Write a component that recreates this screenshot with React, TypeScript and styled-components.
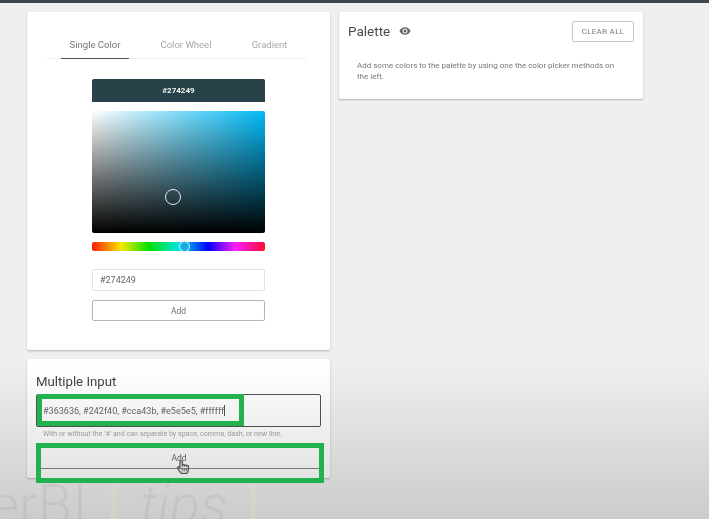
import React from "react";
import styled, { createGlobalStyle } from "styled-components";
import { MdVisibility } from "react-icons/md";
import { FaRegHandPointer } from "react-icons/fa";

const GlobalStyle = createGlobalStyle`
  html, body {
    margin: 0;
    padding: 0;
    background: #efefef;
  }
  * {
    box-sizing: border-box;
  }
`;

const tabs = ["Single Color", "Color Wheel", "Gradient"];

const App: React.FC = () => {
  return (
    <>
      <GlobalStyle />
      <Page>
        <TopBar />
        <Columns>
          <LeftColumn>
            <PickerCard>
              <Tabs>
                {tabs.map((tab, key) => (
                  <Tab key={tab} $active={key === 0}>
                    {tab}
                  </Tab>
                ))}
              </Tabs>
              <Picker>
                <ColorHeader>#274249</ColorHeader>
                <Saturation>
                  <SaturationThumb />
                </Saturation>
                <Hue>
                  <HueThumb />
                </Hue>
                <HexInput readOnly value="#274249" />
                <PickerButton>Add</PickerButton>
              </Picker>
            </PickerCard>
            <MultipleCard>
              <CardTitle>Multiple Input</CardTitle>
              <MultipleInput>
                #363636, #242f40, #cca43b, #e5e5e5, #ffffff
                <Caret />
              </MultipleInput>
              <Hint>With or without the '#' and can separate by space, comma, dash, or new line.</Hint>
              <WideButton>Add</WideButton>
            </MultipleCard>
          </LeftColumn>
          <PaletteCard>
            <PaletteHeader>
              <PaletteTitle>
                Palette
                <MdVisibility size={12} color="#666" />
              </PaletteTitle>
              <ClearButton>CLEAR ALL</ClearButton>
            </PaletteHeader>
            <PaletteText>
              Add some colors to the palette by using one the color picker methods on the left.
            </PaletteText>
          </PaletteCard>
        </Columns>
        <Shade />
        <Watermark>
          <span>erBI</span>
          <Bar />
          <Tips>tips</Tips>
          <Bar />
        </Watermark>
        <InputHighlight />
        <ButtonHighlight />
        <HandCursor>
          <FaRegHandPointer size={14} color="#555" />
        </HandCursor>
      </Page>
    </>
  );
};

const Page = styled.div`
  position: relative;
  width: 709px;
  height: 519px;
  overflow: hidden;
  background: #efefef;
  font-family: Roboto, "Liberation Sans", sans-serif;
  filter: blur(0.35px);
`;

const TopBar = styled.div`
  height: 3px;
  background: #3b4751;
`;

const Columns = styled.div`
  display: flex;
  align-items: flex-start;
  gap: 9px;
  padding: 9px 0 0 27px;
`;

const LeftColumn = styled.div`
  display: flex;
  flex-direction: column;
  gap: 9px;
  width: 303px;
`;

const Card = styled.section`
  background: #ffffff;
  border-radius: 2px;
  box-shadow: 0 1px 2px rgba(0, 0, 0, 0.25);
`;

const PickerCard = styled(Card)`
  height: 338px;
  padding: 18px 23px 0 20px;
`;

const Tabs = styled.div`
  display: grid;
  grid-template-columns: 68px 114px 53px;
  height: 29px;
  padding-left: 14px;
  border-bottom: 1px solid #f0f0f0;
`;

const Tab = styled.div<{ $active: boolean }>`
  height: 29px;
  padding-top: 9px;
  font-size: 9.5px;
  text-align: center;
  white-space: nowrap;
  color: ${({ $active }) => ($active ? "#777777" : "#a8a8a8")};
  border-bottom: 1px solid ${({ $active }) => ($active ? "#555555" : "transparent")};
`;

const Picker = styled.div`
  display: flex;
  flex-direction: column;
  width: 173px;
  margin: 20px 0 0 45px;
`;

const ColorHeader = styled.div`
  display: flex;
  align-items: center;
  justify-content: center;
  height: 23px;
  border-radius: 2px 2px 0 0;
  background: #274249;
  color: #f2f2f2;
  font-size: 8px;
  font-weight: 700;
`;

const Saturation = styled.div`
  position: relative;
  height: 122px;
  margin-top: 9px;
  border-radius: 2px;
  background: linear-gradient(to top, #000000, rgba(0, 0, 0, 0)),
    linear-gradient(to right, #ffffff, #00b9f5);
`;

const SaturationThumb = styled.div`
  position: absolute;
  left: 73px;
  top: 78px;
  width: 16px;
  height: 16px;
  border: 1px solid #dfe9ec;
  border-radius: 50%;
`;

const Hue = styled.div`
  position: relative;
  height: 9px;
  margin-top: 9px;
  border-radius: 2px;
  background: linear-gradient(
    to right,
    #ff1a00,
    #f5e900 17%,
    #00e000 33%,
    #00e5e5 50%,
    #0000ff 67%,
    #ff20ff 83%,
    #ff0a30
  );
`;

const HueThumb = styled.div`
  position: absolute;
  left: 87px;
  top: -1px;
  width: 11px;
  height: 11px;
  border: 1px solid #e8f4f8;
  border-radius: 50%;
  background: #12aee6;
`;

const HexInput = styled.input`
  height: 22px;
  margin-top: 18px;
  padding: 0 7px;
  border: 1px solid #e2e2e2;
  border-radius: 2px;
  outline: none;
  color: #666666;
  font-family: inherit;
  font-size: 9px;
`;

const PickerButton = styled.button`
  height: 21px;
  margin-top: 9px;
  padding: 0;
  border: 1px solid #b5b5b5;
  border-radius: 2px;
  background: #ffffff;
  color: #707070;
  font-family: inherit;
  font-size: 8.5px;
`;

const MultipleCard = styled(Card)`
  height: 119px;
  padding: 15px 9px 0;
`;

const CardTitle = styled.h2`
  margin: 0;
  font-size: 13.2px;
  font-weight: 400;
  line-height: 16px;
  color: #444444;
`;

const MultipleInput = styled.div`
  display: flex;
  align-items: center;
  height: 33px;
  margin-top: 4px;
  padding-left: 6px;
  border: 1.5px solid #555555;
  border-radius: 2px;
  color: #666666;
  font-size: 9.05px;
  white-space: nowrap;
`;

const Caret = styled.span`
  width: 1px;
  height: 11px;
  background: #555555;
`;

const Hint = styled.p`
  margin: 2px 0 0 7px;
  font-size: 7.1px;
  line-height: 10px;
  white-space: nowrap;
  color: #a5a5a5;
`;

const WideButton = styled.button`
  display: block;
  width: 285px;
  height: 21px;
  margin-top: 9px;
  padding: 0;
  border: none;
  border-left: 1px solid #a8a8a8;
  border-bottom: 1px solid #8a8a8a;
  background: transparent;
  color: #666666;
  font-family: inherit;
  font-size: 8.5px;
`;

const PaletteCard = styled(Card)`
  width: 304px;
  height: 87px;
  padding: 9px 9px 0;
`;

const PaletteHeader = styled.div`
  display: flex;
  align-items: center;
  justify-content: space-between;
  height: 20px;
`;

const PaletteTitle = styled.h2`
  display: flex;
  align-items: center;
  gap: 9px;
  margin: 0;
  font-size: 13.5px;
  font-weight: 400;
  color: #4a4a4a;
`;

const ClearButton = styled.button`
  width: 62px;
  height: 21px;
  padding: 0;
  border: 1px solid #c8c8c8;
  border-radius: 2px;
  background: #ffffff;
  color: #7a7a7a;
  font-family: inherit;
  font-size: 8px;
  letter-spacing: 0.3px;
`;

const PaletteText = styled.p`
  margin: 19px 10px 0 9px;
  font-size: 8px;
  line-height: 11px;
  color: #777777;
`;

const Shade = styled.div`
  position: absolute;
  inset: 362px 0 0;
  pointer-events: none;
  background: linear-gradient(to bottom, rgba(0, 0, 0, 0), rgba(0, 0, 0, 0.15));
`;

const Watermark = styled.div`
  position: absolute;
  left: -10px;
  top: 477px;
  display: flex;
  align-items: flex-start;
  font-size: 56px;
  line-height: 56px;
  font-weight: 300;
  white-space: nowrap;
  color: rgba(0, 0, 0, 0.05);
`;

const Tips = styled.em`
  margin-left: 24px;
`;

const Bar = styled.span`
  width: 5px;
  height: 40px;
  margin: 8px 0 0 24px;
  background: rgba(235, 235, 170, 0.2);
`;

const Highlight = styled.div`
  position: absolute;
  border: 5px solid #21b14d;
  pointer-events: none;
`;

const InputHighlight = styled(Highlight)`
  left: 37px;
  top: 394px;
  width: 207px;
  height: 32px;
`;

const ButtonHighlight = styled(Highlight)`
  left: 36px;
  top: 443px;
  width: 288px;
  height: 40px;
`;

const HandCursor = styled.div`
  position: absolute;
  left: 176px;
  top: 460px;
  display: flex;
`;

export default App;
